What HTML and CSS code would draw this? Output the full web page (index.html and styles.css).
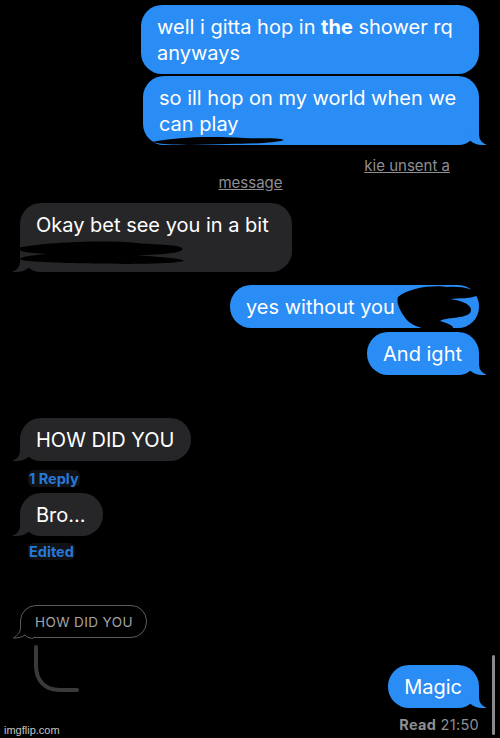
FILE: index.html
```html
<!DOCTYPE html>
<html lang="en">
<head>
  <meta charset="UTF-8">
  <title>Messages</title>
  <meta name="viewport" content="width=device-width, initial-scale=1.0">
  <link rel="stylesheet" href="styles.css">
</head>
<body>
  <div class="chat">
    <div class="row sent"><div class="bubble blue w1">well i gitta hop in <b>the</b> shower rq<br>anyways</div></div>
    <div class="row sent tight"><div class="bubble blue tail w2">so ill hop on my world when we<br>can play</div></div>

    <div class="unsent">
      <div class="unsent-line1"><span class="hidden-name">████████████</span><u>kie unsent a</u></div>
      <div class="unsent-line2"><u>message</u></div>
    </div>

    <div class="row recv gap-md"><div class="bubble gray tail w4">Okay bet see you in a bit<br>&nbsp;</div></div>

    <div class="row sent gap-md2"><div class="bubble blue w3">yes without you</div></div>
    <div class="row sent tight2"><div class="bubble blue tail">And ight</div></div>

    <div class="row recv gap-lg"><div class="bubble gray tail">HOW DID YOU</div></div>
    <div class="row recv meta-row"><span class="meta">1 Reply</span></div>
    <div class="row recv gap-sm"><div class="bubble gray tail">Bro...</div></div>
    <div class="row recv meta-row2"><span class="meta">Edited</span></div>

    <div class="bottom">
      <div class="thread">
        <div class="quote">HOW DID YOU
          <svg class="quote-tail" width="20" height="15" viewBox="0 0 20 15">
            <path d="M7.5 0 V4 C7.5 8 5 11 0.5 14 C5 14.2 9 13.2 12 11 C13.5 13 16 14.2 20 14.5 L20 0 Z" fill="#000"/>
            <path d="M7.5 0 V4 C7.5 8 5 11 0.5 14 C5 14.2 9 13.2 12 11 C13.5 13 16 14.2 20 14.5" fill="none" stroke="#5c5c60" stroke-width="1"/>
          </svg>
        </div>
        <svg class="curve" width="60" height="52" viewBox="0 0 60 52">
          <path d="M16 4 V22 C16 37 24 47 40 47 H57" fill="none" stroke="#3a3a3d" stroke-width="4" stroke-linecap="round"/>
        </svg>
      </div>
      <div class="last">
        <div class="bubble blue tail">Magic</div>
        <div class="read"><b>Read</b> 21:50</div>
      </div>
    </div>

    <!-- redaction scribbles -->
    <svg class="scribble s1" width="140" height="14" viewBox="0 0 140 14">
      <path d="M4 8 C30 3 60 2 96 4 C110 5 128 3 136 6 C128 9 100 10 80 10 C50 11 20 12 4 8 Z" fill="#000"/>
    </svg>
    <svg class="scribble s2" width="175" height="28" viewBox="0 0 175 28">
      <path d="M2 10 C30 4 90 2 120 5 C140 7 160 6 166 10 C170 14 150 17 120 17 C140 19 166 20 168 23 C150 27 90 26 50 25 C30 24 10 24 3 21 C8 18 20 17 30 16 C15 15 2 14 2 10 Z" fill="#000"/>
    </svg>
    <svg class="scribble s3" width="90" height="50" viewBox="0 0 90 50">
      <path d="M6 14 C18 4 42 2 56 4 C70 3 84 6 86 12 C80 16 66 15 58 16 C74 18 82 24 78 30 C72 36 54 34 48 38 C62 42 66 46 54 48 C36 48 20 44 14 36 C8 28 4 20 6 14 Z" fill="#000"/>
    </svg>
  </div>

  <div class="scrollbar"></div>
  <div class="watermark">imgflip.com</div>
</body>
</html>
```

FILE: styles.css
```css
html, body {
  margin: 0;
  background: #000;
}
body {
  font-family: Inter, "Liberation Sans", sans-serif;
  color: #fff;
  width: 500px;
  height: 738px;
  overflow: hidden;
  position: relative;
}
.chat {
  position: relative;
  padding: 5px 21px 0 20px;
}
.row { display: flex; }
.sent { justify-content: flex-end; }
.recv { justify-content: flex-start; }
.tight { margin-top: 2px; }
.tight2 { margin-top: 4px; }
.gap-sm { margin-top: 6px; }
.gap-md { margin-top: 12px; }
.gap-md2 { margin-top: 13px; }
.gap-lg { margin-top: 43px; }

.bubble {
  position: relative;
  font-size: 20px;
  line-height: 26px;
  padding: 9px 17px 8px 16px;
  border-radius: 21px;
  white-space: nowrap;
}
.blue { background: #2a8cf5; }
.gray { background: #262629; }
.w1 { width: 305px; }
.w2 { width: 303px; }
.w3 { width: 216px; }
.w4 { width: 239px; }

/* tails */
.bubble.tail::before,
.bubble.tail::after {
  content: "";
  position: absolute;
  bottom: 0;
  height: 20px;
}
.blue.tail::before {
  right: -7px;
  width: 20px;
  background: #2a8cf5;
  border-bottom-left-radius: 16px 14px;
}
.blue.tail::after {
  right: -10px;
  width: 10px;
  background: #000;
  border-bottom-left-radius: 10px;
}
.gray.tail::before {
  left: -7px;
  width: 20px;
  background: #262629;
  border-bottom-right-radius: 16px 14px;
}
.gray.tail::after {
  left: -10px;
  width: 10px;
  background: #000;
  border-bottom-right-radius: 10px;
}

.unsent {
  margin-top: 12px;
  font-size: 15px;
  line-height: 17px;
  color: #8e8e93;
}
.unsent-line1 {
  display: flex;
  justify-content: flex-end;
  padding-right: 29px;
}
.hidden-name { color: #000; margin-right: 2px; }
.unsent-line2 {
  text-align: center;
  padding-left: 2px;
}

.meta-row { margin-top: 9px; padding-left: 8px; }
.meta-row2 { margin-top: 7px; padding-left: 8px; }
.meta {
  font-size: 14.5px;
  line-height: 17px;
  font-weight: 700;
  color: #2779d8;
  background: #111216;
  border-radius: 6px;
  padding: 0 1px;
}

.bottom {
  display: flex;
  justify-content: space-between;
  align-items: flex-start;
  margin-top: 45px;
}
.quote {
  position: relative;
  display: inline-block;
  border: 1px solid #5c5c60;
  border-radius: 16px 16px 16px 12px;
  padding: 7px 13px 6px 14px;
  font-size: 13.5px;
  line-height: 18px;
  letter-spacing: 0.4px;
  color: #a4a4a8;
}
.quote-tail {
  position: absolute;
  left: -8px;
  bottom: -1.5px;
}
.curve {
  display: block;
  margin-top: 5px;
}
.last {
  margin-top: 60px;
  display: flex;
  flex-direction: column;
  align-items: flex-end;
}
.read {
  margin-top: 8px;
  font-size: 14.5px;
  line-height: 17px;
  color: #8e8e93;
  letter-spacing: 0.3px;
}

.scribble { position: absolute; }
.s1 { left: 148px; top: 134px; }
.s2 { left: 16px; top: 238px; }
.s3 { left: 392px; top: 283px; }

.scrollbar {
  position: absolute;
  right: 5px;
  top: 655px;
  width: 3px;
  height: 80px;
  border-radius: 2px;
  background: #8a8a8e;
}
.watermark {
  position: absolute;
  left: 4px;
  bottom: 2px;
  font-family: "Liberation Sans", sans-serif;
  font-size: 11px;
  color: #c4c4c4;
}
```
